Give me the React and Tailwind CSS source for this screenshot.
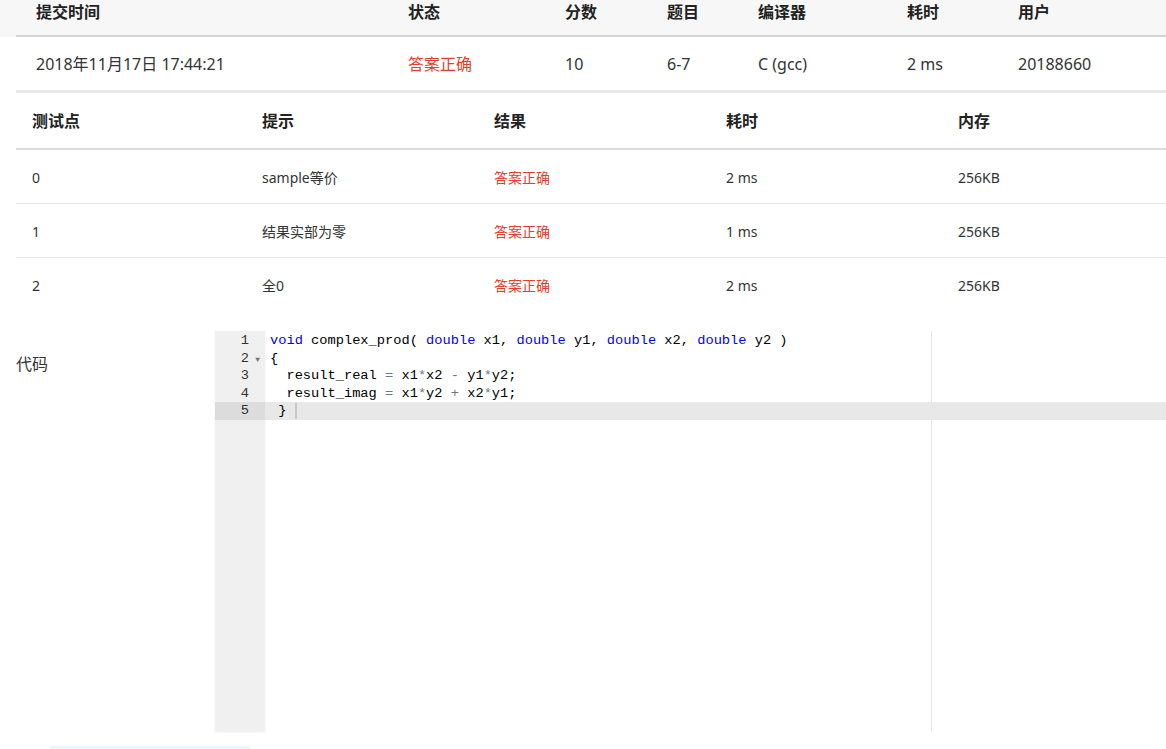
import React from "react";

const RED = "text-[#e53e30]";

function Op({ children }) {
  return <span className="text-[#687687]">{children}</span>;
}
function Kw({ children }) {
  return <span className="text-[#0000ff]">{children}</span>;
}

const t1 = [
  { h: "提交时间", v: "2018年11月17日 17:44:21", w: "w-[372px]" },
  { h: "状态", v: "答案正确", w: "w-[157px]", red: true },
  { h: "分数", v: "10", w: "w-[102px]" },
  { h: "题目", v: "6-7", w: "w-[91px]" },
  { h: "编译器", v: "C (gcc)", w: "w-[149px]" },
  { h: "耗时", v: "2 ms", w: "w-[111px]" },
  { h: "用户", v: "20188660", w: "flex-1" },
];

const t2h = ["测试点", "提示", "结果", "耗时", "内存"];
const t2rows = [
  ["0", "sample等价", "答案正确", "2 ms", "256KB"],
  ["1", "结果实部为零", "答案正确", "1 ms", "256KB"],
  ["2", "全0", "答案正确", "2 ms", "256KB"],
];
const t2w = ["w-[230px]", "w-[232px]", "w-[232px]", "w-[232px]", "w-[232px]"];

export default function App() {
  return (
    <div
      className="w-[1166px] h-[749px] overflow-hidden bg-white text-[#333] relative"
      style={{ fontFamily: '"Noto Sans", "Noto Sans CJK SC", sans-serif' }}
    >
      {/* table 1 header */}
      <div className="bg-[#f7f7f7]">
        <div className="ml-4 flex h-[37px] border-b-2 border-[#d4d4d4] text-[16px] font-bold text-[#222]">
          {t1.map((c, i) => (
            <div key={i} className={`${c.w} shrink-0 pl-5 leading-[24px]`}>
              {c.h}
            </div>
          ))}
        </div>
      </div>
      {/* table 1 row */}
      <div className="ml-4 flex h-[56px] items-center border-b-[3px] border-[#e8e8e8] text-[16px]">
        {t1.map((c, i) => (
          <div
            key={i}
            className={`${c.w} shrink-0 pl-5 ${c.red ? RED : "text-[#333]"}`}
          >
            {c.v}
          </div>
        ))}
      </div>
      {/* table 2 */}
      <div className="ml-4 flex h-[57px] items-center border-b-[2px] border-[#dcdcdc] text-[16px] font-bold text-[#222]">
        {t2h.map((h, i) => (
          <div key={i} className={`${t2w[i]} shrink-0 pl-4`}>
            {h}
          </div>
        ))}
      </div>
      {t2rows.map((r, ri) => (
        <div
          key={ri}
          className={`ml-4 flex h-[54px] items-center text-[14px] ${
            ri < 2 ? "border-b border-[#e6e6e6]" : ""
          }`}
        >
          {r.map((v, i) => (
            <div
              key={i}
              className={`${t2w[i]} shrink-0 pl-4 pt-[1px] ${i === 2 ? RED : "text-[#333]"}`}
            >
              {v}
            </div>
          ))}
        </div>
      ))}

      {/* code */}
      <div className="mt-[19px] flex">
        <div className="w-[215px] shrink-0 pl-4 pt-[21px] text-[16px] text-[#333]">代码</div>
        <div
          className="relative flex h-[400px] flex-1 pt-[1px] text-[13.7px] leading-[17.5px]"
          style={{ fontFamily: '"Liberation Mono", monospace' }}
        >
          <div className="absolute left-0 top-0 h-full w-[50px] bg-[#f0f0f0] shadow-[0_1px_2px_rgba(0,0,0,0.08)]" />
          <div className="relative w-[50px] shrink-0 text-[#333]">
            {[1, 2, 3, 4, 5].map((n) => (
              <div
                key={n}
                className={`relative h-[17.5px] pr-[16px] text-right ${
                  n === 5 ? "bg-[#dcdcdc]" : ""
                }`}
              >
                {n}
                {n === 2 && (
                  <span className="absolute right-[5px] top-[1px] text-[8px] text-[#777]">▼</span>
                )}
              </div>
            ))}
          </div>
          <div className="relative flex-1 text-black">
            <div className="absolute left-[666px] top-[-1px] h-[400px] w-px bg-[#e4e4e4]" />
            <div className="whitespace-pre pl-[5px] h-[17.5px]">
              <Kw>void</Kw> complex_prod( <Kw>double</Kw> x1, <Kw>double</Kw> y1, <Kw>double</Kw> x2, <Kw>double</Kw> y2 )
            </div>
            <div className="whitespace-pre pl-[5px] h-[17.5px]">{"{"}</div>
            <div className="whitespace-pre pl-[5px] h-[17.5px]">
              {"  result_real "}<Op>=</Op>{" x1"}<Op>*</Op>{"x2 "}<Op>-</Op>{" y1"}<Op>*</Op>{"y2;"}
            </div>
            <div className="whitespace-pre pl-[5px] h-[17.5px]">
              {"  result_imag "}<Op>=</Op>{" x1"}<Op>*</Op>{"y2 "}<Op>+</Op>{" x2"}<Op>*</Op>{"y1;"}
            </div>
            <div className="relative whitespace-pre pl-[5px] h-[17.5px] bg-[#e8e8e8]">
              {" }"}
              <span className="absolute left-[30px] top-[1px] h-[16px] w-[2px] bg-[#c8c8c8]" />
            </div>
          </div>
        </div>
      </div>

      <div className="absolute bottom-0 left-[50px] h-[3px] w-[200px] bg-[#eaf6ff]" />
    </div>
  );
}
